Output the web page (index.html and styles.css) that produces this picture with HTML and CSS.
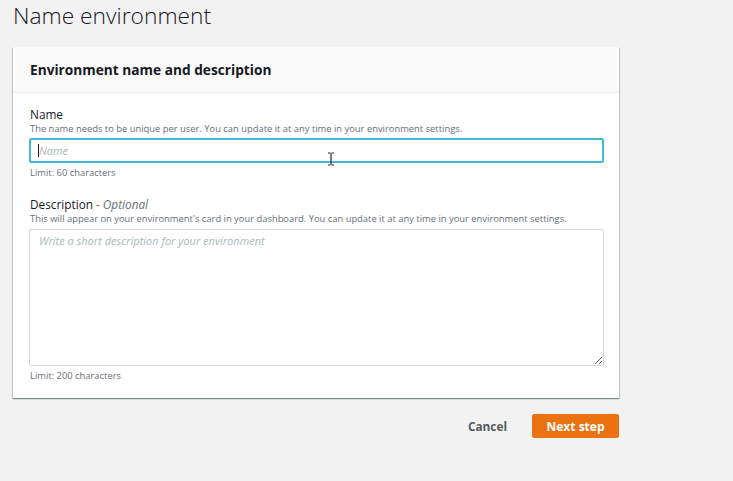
FILE: index.html
```html
<!DOCTYPE html>
<html lang="en">
<head>
<meta charset="utf-8">
<title>Name environment</title>
<link rel="stylesheet" href="styles.css">
</head>
<body>
<div class="page">
  <h1 class="title">Name environment</h1>
  <div class="card">
    <div class="card-header">
      <h2 class="card-title">Environment name and description</h2>
    </div>
    <div class="card-body">
      <div class="field">
        <label class="label" for="name">Name</label>
        <div class="help">The name needs to be unique per user. You can update it at any time in your environment settings.</div>
        <div class="input-wrap">
          <input id="name" class="input" type="text" placeholder="Name">
          <span class="caret"></span>
          <svg class="ibeam" width="8" height="14" viewBox="0 0 8 14"><path d="M1 1h2.5M4.5 1H7M4 1.5v11M1 13h2.5M4.5 13H7" stroke="#222" stroke-width="1.2" fill="none"/></svg>
        </div>
        <div class="limit">Limit: 60 characters</div>
      </div>
      <div class="field field-desc">
        <label class="label" for="desc">Description <span class="optional">- Optional</span></label>
        <div class="help">This will appear on your environment's card in your dashboard. You can update it at any time in your environment settings.</div>
        <textarea id="desc" class="textarea" placeholder="Write a short description for your environment"></textarea>
        <div class="limit">Limit: 200 characters</div>
      </div>
    </div>
  </div>
  <div class="actions">
    <button class="btn-link" type="button">Cancel</button>
    <button class="btn-primary" type="button">Next step</button>
  </div>
</div>
</body>
</html>
```
FILE: styles.css
```css
html, body {
  margin: 0;
  padding: 0;
  background: #f2f2f2;
  font-family: "Open Sans", "Noto Sans", sans-serif;
  color: #16191f;
}
.page {
  width: 606px;
  padding: 0 0 0 13px;
}
.title {
  margin: 0;
  height: 40px;
  padding-top: 1px;
  box-sizing: border-box;
  font-size: 22.8px;
  font-weight: 300;
  line-height: 30px;
  color: #16191f;
}
.card {
  margin-top: 7px;
  background: #fff;
  box-shadow: 0 1px 1px 0 rgba(0, 28, 36, 0.3), 1px 1px 1px 0 rgba(0, 28, 36, 0.15), -1px 1px 1px 0 rgba(0, 28, 36, 0.15);
}
.card-header {
  height: 46px;
  box-sizing: border-box;
  background: #fafafa;
  border-bottom: 1px solid #eaeded;
  display: flex;
  align-items: center;
  padding: 0 17px;
}
.card-title {
  margin: 0;
  font-size: 13.7px;
  font-weight: 700;
  color: #16191f;
}
.card-body {
  padding: 13px 15px 15px 16px;
}
.field {
  display: flex;
  flex-direction: column;
}
.field-desc {
  margin-top: 16px;
}
.label {
  padding-left: 1px;
  font-size: 11.8px;
  line-height: 16px;
  color: #16191f;
}
.optional {
  font-style: italic;
  color: #687078;
}
.help {
  padding-left: 1px;
  font-size: 9.4px;
  line-height: 14px;
  color: #687078;
}
.input-wrap {
  position: relative;
  margin-top: 2px;
}
.input {
  display: block;
  width: 100%;
  height: 25px;
  box-sizing: border-box;
  border: 2px solid #44b9d6;
  border-radius: 2px;
  padding: 0 8px;
  font-family: inherit;
  font-size: 11px;
  outline: none;
  background: #fff;
}
.input::placeholder {
  font-style: italic;
  color: #aab7b8;
}
.caret {
  position: absolute;
  left: 9px;
  top: 6px;
  width: 1px;
  height: 13px;
  background: #16191f;
}
.ibeam {
  position: absolute;
  left: 298px;
  top: 14px;
}
.textarea {
  display: block;
  margin-top: 3px;
  width: 100%;
  height: 137px;
  box-sizing: border-box;
  border: 1px solid #d5dbdb;
  border-radius: 2px;
  padding: 3px 9px;
  font-family: inherit;
  font-size: 11px;
  background: #fff;
  resize: vertical;
}
.textarea::placeholder {
  font-style: italic;
  color: #aab7b8;
}
.limit {
  margin-top: 3px;
  padding-left: 1px;
  font-size: 9.4px;
  line-height: 14px;
  color: #687078;
}
.actions {
  margin-top: 16px;
  display: flex;
  justify-content: flex-end;
  align-items: center;
  gap: 21px;
}
.btn-link {
  border: none;
  background: transparent;
  font-family: inherit;
  font-size: 11.8px;
  font-weight: 700;
  color: #545b64;
  padding: 0 4px;
  height: 24px;
}
.btn-primary {
  width: 87px;
  height: 24px;
  border: 1px solid #ec7211;
  border-radius: 2px;
  background: #ec7211;
  color: #fff;
  font-family: inherit;
  font-size: 12px;
  font-weight: 700;
  padding: 0;
}
```
